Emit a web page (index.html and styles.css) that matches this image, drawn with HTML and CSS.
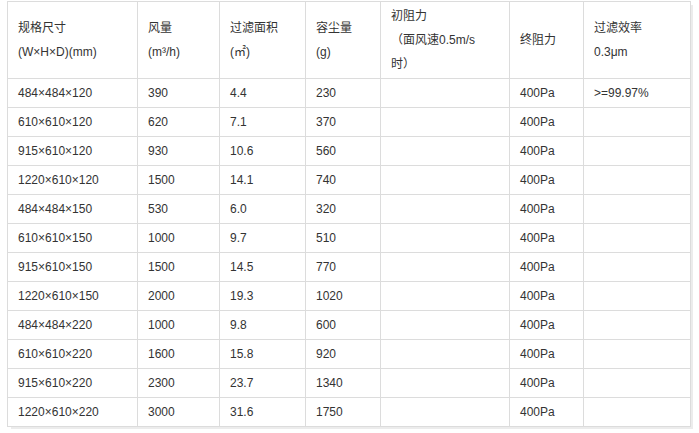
FILE: index.html
```html
<!DOCTYPE html>
<html lang="zh">
<head>
<meta charset="utf-8">
<link rel="stylesheet" href="styles.css">
</head>
<body>
<div class="frame">
<table class="spec">
<colgroup>
<col class="c1"><col class="c2"><col class="c3"><col class="c4"><col class="c5"><col class="c6"><col class="c7">
</colgroup>
<thead>
<tr>
<th>规格尺寸<br>(W×H×D)(mm)</th>
<th>风量<br>(m³/h)</th>
<th>过滤面积<br>(㎡)</th>
<th>容尘量<br>(g)</th>
<th>初阻力<br>（面风速0.5m/s<br>时）</th>
<th>终阻力</th>
<th>过滤效率<br>0.3μm</th>
</tr>
</thead>
<tbody>
<tr><td>484×484×120</td><td>390</td><td>4.4</td><td>230</td><td></td><td>400Pa</td><td>&gt;=99.97%</td></tr>
<tr><td>610×610×120</td><td>620</td><td>7.1</td><td>370</td><td></td><td>400Pa</td><td></td></tr>
<tr><td>915×610×120</td><td>930</td><td>10.6</td><td>560</td><td></td><td>400Pa</td><td></td></tr>
<tr><td>1220×610×120</td><td>1500</td><td>14.1</td><td>740</td><td></td><td>400Pa</td><td></td></tr>
<tr><td>484×484×150</td><td>530</td><td>6.0</td><td>320</td><td></td><td>400Pa</td><td></td></tr>
<tr><td>610×610×150</td><td>1000</td><td>9.7</td><td>510</td><td></td><td>400Pa</td><td></td></tr>
<tr><td>915×610×150</td><td>1500</td><td>14.5</td><td>770</td><td></td><td>400Pa</td><td></td></tr>
<tr><td>1220×610×150</td><td>2000</td><td>19.3</td><td>1020</td><td></td><td>400Pa</td><td></td></tr>
<tr><td>484×484×220</td><td>1000</td><td>9.8</td><td>600</td><td></td><td>400Pa</td><td></td></tr>
<tr><td>610×610×220</td><td>1600</td><td>15.8</td><td>920</td><td></td><td>400Pa</td><td></td></tr>
<tr><td>915×610×220</td><td>2300</td><td>23.7</td><td>1340</td><td></td><td>400Pa</td><td></td></tr>
<tr><td>1220×610×220</td><td>3000</td><td>31.6</td><td>1750</td><td></td><td>400Pa</td><td></td></tr>
</tbody>
</table>
</div>
</body>
</html>
```
FILE: styles.css
```css
html, body {
  margin: 0;
  padding: 0;
  background: #fff;
}
body {
  padding: 1px 0 0 7px;
  font-family: "Liberation Sans", Arial, "Noto Sans CJK SC", sans-serif;
  font-size: 12px;
  color: #333;
}
.frame {
  display: inline-block;
  box-shadow: 3px 3px 0 -1px #ececec;
}
.spec {
  border-collapse: collapse;
  table-layout: fixed;
  width: 683px;
}
.c1 { width: 130px; }
.c2 { width: 82px; }
.c3 { width: 86px; }
.c4 { width: 75px; }
.c5 { width: 129px; }
.c6 { width: 74px; }
.c7 { width: 107px; }
.spec th,
.spec td {
  border: 1px solid #dcdcdc;
  padding: 2px 10px 2px 10px;
  line-height: 24px;
  text-align: left;
  vertical-align: middle;
  font-weight: normal;
  white-space: nowrap;
}
.spec td {
  height: 24px;
}
```
